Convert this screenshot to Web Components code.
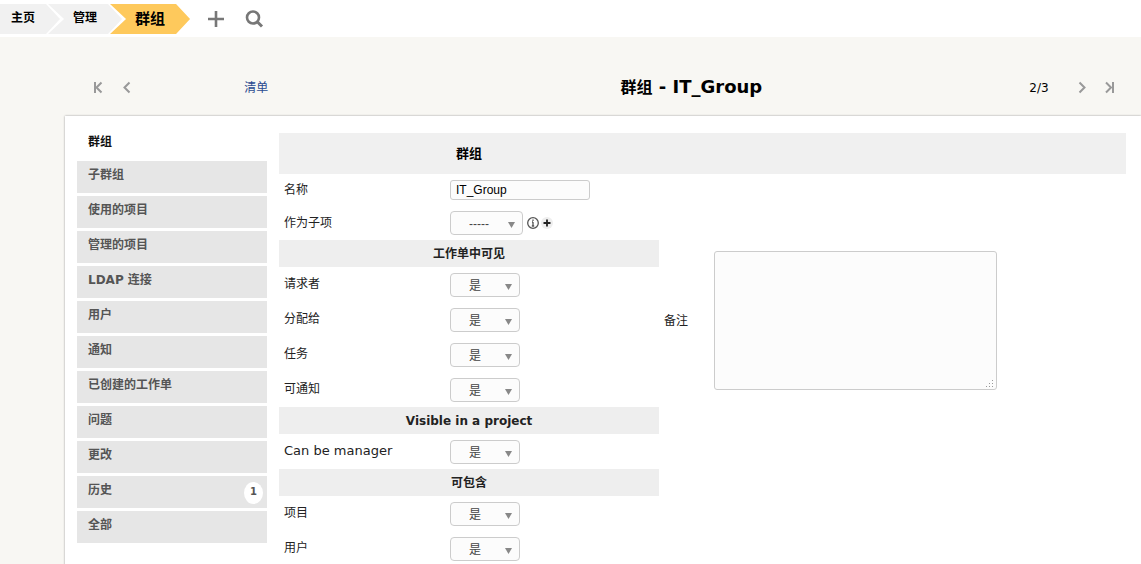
<!DOCTYPE html>
<html lang="zh-CN">
<head>
<meta charset="utf-8">
<meta name="viewport" content="width=device-width, initial-scale=1">
<title>群组 - IT_Group</title>
<style>
html { scrollbar-width: none; }
body {
  margin: 0;
  background: #f8f7f3;
  color: #222;
  font: 12px/18px "DejaVu Sans", "Noto Sans CJK SC", sans-serif;
}
</style>
</head>
<body>
<group-page></group-page>
<script>
const define = (name, html, setup) => {
  const template = document.createElement('template');
  template.innerHTML = '<style>*{box-sizing:border-box}a{color:inherit;text-decoration:none}button{border:0;padding:0;background:none;cursor:pointer;display:grid;place-items:center}svg{display:block}[hidden]{display:none}</style>' + html;
  customElements.define(name, class extends HTMLElement {
    constructor() {
      super();
      this.attachShadow({ mode: 'open' }).append(template.content.cloneNode(true));
    }
    connectedCallback() {
      if (setup) setup(this, this.shadowRoot);
    }
  });
};

define('crumb-item', `
<style>
:host { display: block; }
a {
  display: block; height: 30px; line-height: 28px; padding: 0 25px;
  background: #f1f1f1; color: #000; font-weight: bold; white-space: nowrap;
  clip-path: polygon(0 0, calc(100% - 14px) 0, 100% 50%, calc(100% - 14px) 100%, 0 100%, 16px 50%);
}
:host([first]) a {
  padding-left: 11px;
  clip-path: polygon(0 0, calc(100% - 14px) 0, 100% 50%, calc(100% - 14px) 100%, 0 100%);
}
:host(:not([first])) { margin-left: -12px; }
:host([current]) a { background: #fec95c; font-size: 15px; line-height: 30px; }
</style>
<a href="#"><slot></slot></a>`);

define('top-bar', `
<style>
:host { display: flex; align-items: center; height: 37px; padding-top: 1px; box-sizing: border-box; background: #fff; }
nav { display: flex; }
.tools { display: flex; gap: 18px; margin-left: 16px; }
button { width: 20px; height: 20px; }
</style>
<nav aria-label="导航">
  <crumb-item first>主页</crumb-item><crumb-item>管理</crumb-item><crumb-item current>群组</crumb-item>
</nav>
<div class="tools">
  <button type="button" aria-label="添加"><svg width="20" height="20"><path d="M10 2v16M2 10h16" stroke="#777" stroke-width="2.600"/></svg></button>
  <button type="button" aria-label="搜索"><svg width="20" height="20"><circle cx="9" cy="8.500" r="6" fill="none" stroke="#777" stroke-width="2.600"/><path d="M13 12.500l5 5" stroke="#777" stroke-width="3"/></svg></button>
</div>`);

define('record-nav', `
<style>
:host {
  display: grid; align-items: center; height: 79px; padding: 22px 21px 0 88px; box-sizing: border-box;
  grid-template-columns: 20px 20px 25fr 70fr 50px 20px 20px; column-gap: 8px;
}
button { width: 20px; height: 20px; }
.list { text-align: center; color: #2a4a90; }
h1 { margin: 0; font-size: 18px; line-height: 24px; text-align: center; color: #000; }
h1 span { font-size: 16px; }
.count { text-align: center; color: #000; }
svg { fill: none; stroke: #999; stroke-width: 2; }
</style>
<button type="button" aria-label="第一个"><svg width="20" height="20"><path d="M7 4v11M13.500 4.500l-5 5 5 5"/></svg></button>
<button type="button" aria-label="上一个"><svg width="20" height="20"><path d="M13.500 4.500l-5 5 5 5"/></svg></button>
<div class="list"><a href="#">清单</a></div>
<h1><span>群组</span> - IT_Group</h1>
<div class="count">2/3</div>
<button type="button" aria-label="下一个"><svg width="20" height="20"><path d="M7.500 4.500l5 5-5 5"/></svg></button>
<button type="button" aria-label="最后一个"><svg width="20" height="20"><path d="M6 4.500l5 5-5 5M13 4v11"/></svg></button>`);

define('side-tab', `
<style>
:host { display: block; }
a {
  display: flex; justify-content: space-between; height: 32px; padding: 5px 4px 0 11px;
  background: #e6e6e6; color: #555; font-weight: bold;
}
:host([current]) a { background: #fff; color: #111; padding-top: 7px; }
.badge {
  width: 19px; height: 22px; margin-top: 1px; border-radius: 50%; background: #fff;
  font-size: 10px; line-height: 20px; text-align: center;
}
</style>
<a href="#"><slot></slot><span class="badge" hidden></span></a>`, (host, root) => {
  const badge = root.querySelector('.badge');
  badge.hidden = !host.hasAttribute('count');
  badge.textContent = host.getAttribute('count') || '';
});

define('side-tabs', `
<style>
:host { display: flex; flex-direction: column; gap: 3px; }
</style>
<slot></slot>`);

const row = `
:host { display: grid; grid-template-columns: 45% 1fr; align-items: center; height: 35px; }
label { padding: 0 0 1px 5px; }
.control { display: flex; align-items: center; gap: 4px; }`;

define('text-field', `
<style>${row}
:host { height: 32px; }
input {
  width: 140px; height: 20px; padding: 0 5px; border: 1px solid #ccc; border-radius: 3px;
  background: #fcfcfc; color: #000; font: 12px "Liberation Sans", sans-serif;
}
</style>
<label for="control"></label>
<div class="control"><input id="control" type="text"></div>`, (host, root) => {
  root.querySelector('label').textContent = host.getAttribute('label');
  root.querySelector('input').value = host.getAttribute('value');
});

define('select-field', `
<style>${row}
.box { position: relative; }
select {
  appearance: none; display: block; width: 70px; height: 24px; padding: 2px 0 0 18px;
  border: 1px solid #ccc; border-radius: 4px; background: #fcfcfc; color: #444;
  font: 12px "Liberation Sans", "Noto Sans CJK SC", sans-serif;
}
:host([wide]) { height: 34px; }
:host([wide]) select { width: 73px; }
:host([latin]) label { font-size: 13px; }
.box svg { position: absolute; right: 8px; top: 11px; pointer-events: none; }
</style>
<label for="control"></label>
<div class="control">
  <div class="box"><select id="control"></select><svg width="7" height="6"><path d="M0 0h7L3.500 6z" fill="#888"/></svg></div>
  <slot></slot>
</div>`, (host, root) => {
  root.querySelector('label').textContent = host.getAttribute('label');
  root.querySelector('select').replaceChildren(new Option(host.getAttribute('value') || '是'));
});

define('field-tools', `
<style>
:host { display: flex; gap: 2px; }
button { width: 12px; height: 12px; }
</style>
<button type="button" aria-label="信息"><svg width="12" height="12"><circle cx="6" cy="6" r="5.300" fill="#fff" stroke="#555" stroke-width="1.300"/><path d="M6 5v4M4.800 9h2.400M5 5h1M6 2.600v1.300" stroke="#555" stroke-width="1.300"/></svg></button>
<button type="button" aria-label="添加"><svg width="12" height="12"><circle cx="6" cy="6" r="6" fill="#eee"/><path d="M6 2.500v7M2.500 6h7" stroke="#222" stroke-width="1.800"/></svg></button>`);

define('section-title', `
<style>
:host { display: block; height: 27px; background: #eee; }
h3 { margin: 0; font-size: 12px; line-height: 28px; text-align: center; }
</style>
<h3><slot></slot></h3>`);

define('notes-field', `
<style>
:host { display: flex; align-items: center; padding: 77px 0 0 5px; }
label { width: 50px; }
.box { position: relative; }
textarea {
  display: block; resize: none; width: 283px; height: 139px; border: 1px solid #ccc;
  border-radius: 3px; background: #fcfcfc; font: 12px "Liberation Sans", "Noto Sans CJK SC", sans-serif;
}
svg { position: absolute; right: 3px; bottom: 2px; fill: #999; pointer-events: none; }
</style>
<label for="notes">备注</label>
<div class="box"><textarea id="notes"></textarea>
<svg width="9" height="9"><path d="M7 1h1v1h-1zM4 4h1v1h-1zM7 4h1v1h-1zM1 7h1v1h-1zM4 7h1v1h-1zM7 7h1v1h-1z"/></svg></div>`);

define('group-form', `
<style>
:host { display: block; }
.head, .body { display: grid; grid-template-columns: 35fr 43fr; }
.head { background: #f0f0f0; }
.body { align-items: start; }
h2 { margin: 0; font-size: 13px; line-height: 42px; height: 41px; text-align: center; color: #000; }
</style>
<form>
<div class="head"><h2>群组</h2></div>
<div class="body">
  <div>
    <text-field label="名称" value="IT_Group"></text-field>
    <select-field label="作为子项" value="-----" wide><field-tools></field-tools></select-field>
    <section-title>工作单中可见</section-title>
    <select-field label="请求者"></select-field>
    <select-field label="分配给"></select-field>
    <select-field label="任务"></select-field>
    <select-field label="可通知"></select-field>
    <section-title>Visible in a project</section-title>
    <select-field label="Can be manager" latin></select-field>
    <section-title>可包含</section-title>
    <select-field label="项目"></select-field>
    <select-field label="用户"></select-field>
  </div>
  <notes-field></notes-field>
</div>
</form>`);

define('group-page', `
<style>
:host { display: flex; flex-direction: column; min-height: 100vh; }
main {
  flex: 1; display: grid; grid-template-columns: 190px 1fr; column-gap: 12px; align-items: start;
  margin-left: 65px; padding: 10px 15px 0 12px; background: #fff;
  box-shadow: 0 0 2px #999;
}
group-form { margin-top: 7px; }
</style>
<top-bar></top-bar>
<record-nav></record-nav>
<main>
  <side-tabs>
    <side-tab current>群组</side-tab>
    <side-tab>子群组</side-tab>
    <side-tab>使用的项目</side-tab>
    <side-tab>管理的项目</side-tab>
    <side-tab>LDAP 连接</side-tab>
    <side-tab>用户</side-tab>
    <side-tab>通知</side-tab>
    <side-tab>已创建的工作单</side-tab>
    <side-tab>问题</side-tab>
    <side-tab>更改</side-tab>
    <side-tab count="1">历史</side-tab>
    <side-tab>全部</side-tab>
  </side-tabs>
  <group-form></group-form>
</main>`);
</script>
</body>
</html>
